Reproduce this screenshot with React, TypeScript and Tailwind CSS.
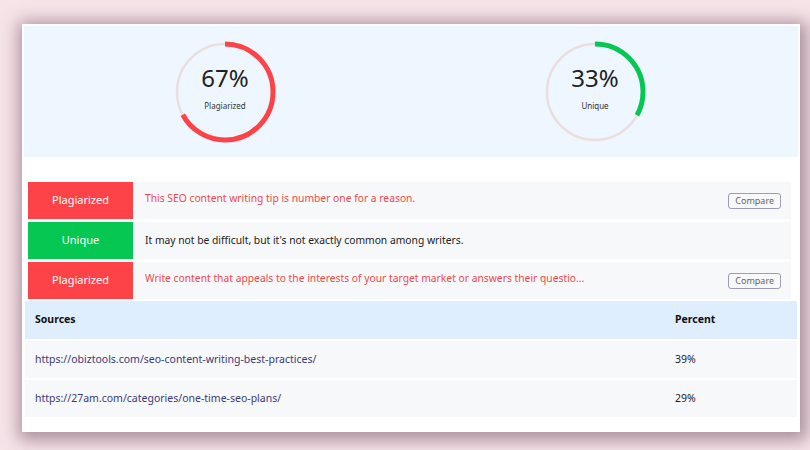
import React from "react";

const font = { fontFamily: '"Noto Sans", "Open Sans", sans-serif' };

function Ring(props: { pct: number; color: string; label: string }) {
  const r = 48;
  const c = 2 * Math.PI * r;
  return (
    <div className="relative w-[102px] h-[102px] flex items-center justify-center">
      <svg width="102" height="102" viewBox="0 0 102 102" className="absolute inset-0">
        <circle cx="51" cy="51" r={r} fill="none" stroke="#eddede" strokeWidth="2.5" />
        <circle
          cx="51"
          cy="51"
          r={r}
          fill="none"
          stroke={props.color}
          strokeWidth="5"
          strokeDasharray={`${(c * props.pct) / 100} ${c}`}
          transform="rotate(-90 51 51)"
        />
      </svg>
      <div className="relative flex flex-col items-center">
        <span className="text-[24px] leading-none text-[#222] mt-[-6px]">{props.pct}%</span>
        <span className="text-[8px] text-[#333] mt-[10px]">{props.label}</span>
      </div>
    </div>
  );
}

function Row(props: { kind: "p" | "u"; text: string; compare?: boolean }) {
  const p = props.kind === "p";
  return (
    <div className="flex items-center h-[37px] bg-[#f7f8fa]">
      <div
        className={`w-[105px] h-full flex items-center justify-center text-white text-[11px] ${
          p ? "bg-[#fd4347]" : "bg-[#06c752]"
        }`}
      >
        {p ? "Plagiarized" : "Unique"}
      </div>
      <div className={`flex-1 pl-[12px] text-[10.3px] ${p ? "text-[#f0494c] mt-[-4px]" : "text-[#222]"}`}>
        {props.text}
      </div>
      {props.compare && (
        <div className="mr-[10px] border border-[#9d9db5] rounded-[3px] px-[6px] h-[16px] flex items-center text-[9px] text-[#666]">
          Compare
        </div>
      )}
    </div>
  );
}

export default function App() {
  return (
    <div className="w-[810px] h-[450px] bg-[#f6e4e9] pt-[24px] pl-[22px]" style={font}>
      <div className="w-[778px] h-[408px] bg-white shadow-[2px_3px_16px_5px_rgba(110,70,90,0.55)] pt-[2px]">
        <div className="mx-[2px] h-[131px] bg-[#eef6ff] flex items-center pl-[150px]">
          <Ring pct={67} color="#fd4347" label="Plagiarized" />
          <div className="w-[268px]" />
          <Ring pct={33} color="#06c752" label="Unique" />
        </div>
        <div className="mt-[25px] ml-[6px] mr-[9px] flex flex-col gap-[3px]">
          <Row kind="p" text="This SEO content writing tip is number one for a reason." compare />
          <Row kind="u" text="It may not be difficult, but it's not exactly common among writers." />
          <Row kind="p" text="Write content that appeals to the interests of your target market or answers their questio..." compare />
        </div>
        <div className="mt-[2px] mx-[3px] flex flex-col gap-[2px] text-[10.5px]">
          <div className="h-[38px] bg-[#deeefe] flex items-center font-bold text-[#111]">
            <div className="flex-1 pl-[10px]">Sources</div>
            <div className="w-[122px]">Percent</div>
          </div>
          <div className="h-[37px] bg-[#f7f8fa] flex items-center">
            <div className="flex-1 pl-[10px] text-[#3a3a78]">https://obiztools.com/seo-content-writing-best-practices/</div>
            <div className="w-[122px] text-[#222]">39%</div>
          </div>
          <div className="h-[37px] bg-[#f7f8fa] flex items-center">
            <div className="flex-1 pl-[10px] text-[#3a3a78]">https://27am.com/categories/one-time-seo-plans/</div>
            <div className="w-[122px] text-[#222]">29%</div>
          </div>
        </div>
      </div>
    </div>
  );
}
